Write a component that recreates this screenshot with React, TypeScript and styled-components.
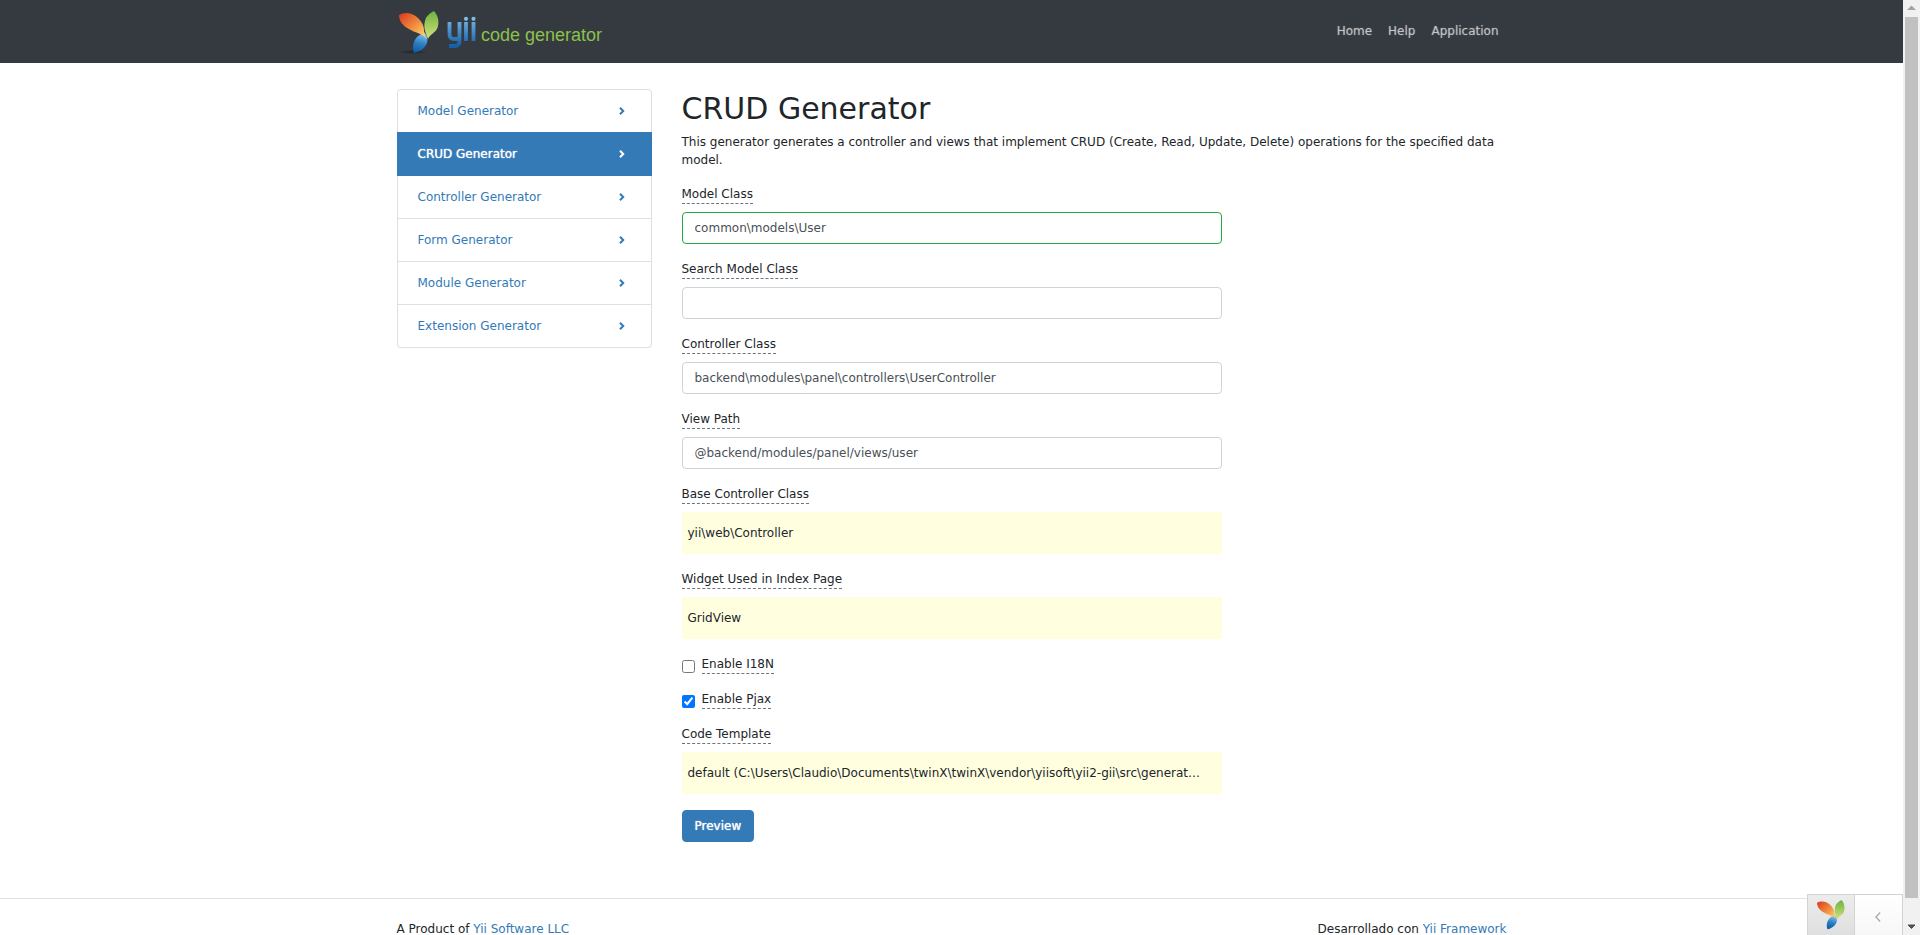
import React from "react";
import styled, { createGlobalStyle, css } from "styled-components";

const GlobalStyle = createGlobalStyle`
  *, *::before, *::after { box-sizing: border-box; }
  html, body { margin: 0; padding: 0; }
  body {
    font-family: Verdana, "DejaVu Sans", sans-serif;
    font-size: 12px;
    line-height: 18px;
    color: #212529;
    background: #fff;
  }
`;

const Shell = styled.div`
  display: grid;
  grid-template-columns: minmax(0, 1fr) 17px;
  height: 100vh;
`;

const Viewport = styled.div`
  height: 100vh;
  overflow-y: auto;
  scrollbar-width: none;
`;

const Container = styled.div`
  width: 100%;
  max-width: 1140px;
  margin: 0 auto;
  padding: 0 15px;
`;

const Header = styled.header`
  background: #343a40;
`;

const HeaderInner = styled(Container)`
  display: flex;
  justify-content: space-between;
  align-items: center;
  height: 63px;
`;

const Brand = styled.a`
  display: block;
  height: 48px;
`;

const Nav = styled.nav`
  display: flex;
  padding: 0 8px 2px 0;
  gap: 16px;
`;

const NavLink = styled.a`
  color: rgba(255, 255, 255, 0.5);
  text-decoration: none;
  text-shadow: 0 0 1px currentColor;
`;

const Body = styled(Container)`
  display: grid;
  grid-template-columns: minmax(0, 255fr) minmax(0, 825fr);
  gap: 30px;
  padding-top: 26px;
  padding-bottom: 56px;
`;

const Menu = styled.nav`
  align-self: start;
  display: flex;
  flex-direction: column;
`;

const MenuItem = styled.a<{ $active?: boolean }>`
  display: flex;
  justify-content: space-between;
  align-items: center;
  padding: 12px 26px 12px 20px;
  border: 1px solid #dfdfdf;
  color: #337ab7;
  text-decoration: none;
  & + & { border-top-width: 0; }
  &:first-child { border-radius: 4px 4px 0 0; }
  &:last-child { border-radius: 0 0 4px 4px; }
  ${(p) =>
    p.$active &&
    css`
      background: #337ab7;
      border-color: #337ab7;
      color: #fff;
      text-shadow: 0 0 1px currentColor;
      && { margin-top: -1px; border-top-width: 1px; }
    `}
`;

const Title = styled.h1`
  margin: 0 0 4px;
  font-size: 30px;
  line-height: 40px;
  font-weight: 400;
`;

const Lead = styled.p`
  margin: 0 0 16px;
`;

const Form = styled.form`
  width: 100%;
  max-width: 540px;
`;

const Group = styled.div`
  margin-bottom: 16px;
`;

const Label = styled.label`
  display: block;
  width: fit-content;
  border-bottom: 1px dashed #6c757d;
`;

const Input = styled.input<{ $valid?: boolean }>`
  display: block;
  width: 100%;
  height: 32px;
  margin-top: 8px;
  padding: 6px 12px;
  font: inherit;
  color: #495057;
  background: #fff;
  border: 1px solid ${(p) => (p.$valid ? "#28a745" : "#ced4da")};
  border-radius: 4px;
`;

const Sticky = styled.output`
  display: block;
  margin-top: 8px;
  padding: 12px 6px;
  background: #ffffe0;
  white-space: nowrap;
  overflow: hidden;
  text-overflow: ellipsis;
`;

const Check = styled.div`
  display: flex;
  gap: 7px;
  margin-bottom: 16px;
`;

const CheckInput = styled.input`
  width: 13px;
  height: 13px;
  margin: 5px 0 0;
`;

const Button = styled.button`
  display: block;
  height: 32px;
  padding: 6px 12px;
  font: inherit;
  color: #fff;
  text-shadow: 0 0 1px currentColor;
  background: #337ab7;
  border: 1px solid #337ab7;
  border-radius: 4px;
`;

const Footer = styled.footer`
  border-top: 1px solid #dee2e6;
  padding: 21px 0;
`;

const FooterInner = styled(Container)`
  display: flex;
  justify-content: space-between;
`;

const Link = styled.a`
  color: #337ab7;
  text-decoration: none;
`;

const Debug = styled.aside`
  position: fixed;
  right: 17px;
  bottom: 0;
  display: flex;
  height: 41px;
  border: 1px solid #d3d3d3;
  border-width: 1px 1px 0;
`;

const DebugLogo = styled.a`
  display: flex;
  align-items: center;
  justify-content: center;
  width: 46px;
  background: linear-gradient(#ececec, #dfdfdf);
`;

const DebugToggle = styled.button`
  display: flex;
  align-items: center;
  justify-content: center;
  width: 48px;
  padding: 4px 2px 0 0;
  border: 0;
  border-left: 1px solid #d3d3d3;
  background: linear-gradient(#fff, #f7f7f7);
`;

const ScrollBar = styled.div`
  display: flex;
  flex-direction: column;
  align-items: center;
  background: #f1f1f1;
`;

const ScrollArrow = styled.svg`
  display: block;
  width: 17px;
  height: 17px;
`;

const ScrollThumb = styled.div`
  width: 13px;
  height: calc(100% - 54px);
  margin-bottom: auto;
  background: #c1c1c1;
`;

const Petals = ({ id }: { id: string }) => (
  <>
    <defs>
      <linearGradient id={id + "o"} x1="0" y1="0" x2="1" y2="1">
        <stop offset="0" stopColor="#d9381e" />
        <stop offset="0.5" stopColor="#f08a3c" />
        <stop offset="1" stopColor="#fde67a" />
      </linearGradient>
      <linearGradient id={id + "g"} x1="0.4" y1="0" x2="0.4" y2="1">
        <stop offset="0" stopColor="#6db33f" />
        <stop offset="1" stopColor="#d3e27a" />
      </linearGradient>
      <linearGradient id={id + "b"} x1="0.6" y1="0" x2="0.4" y2="1">
        <stop offset="0" stopColor="#8cc8f0" />
        <stop offset="0.55" stopColor="#2c7fc4" />
        <stop offset="1" stopColor="#0f5ba5" />
      </linearGradient>
    </defs>
    <path d="M35 0C39 4 41 12 38 18C36 22 31 23 29 28C27 22 24 17 26 10C27 5 31 2 35 0Z" fill={`url(#${id}g)`} />
    <path d="M25 21C28 24 30 29 27 34C24 39 19 41 15 42C13 37 14 30 18 26C20 24 23 23 25 21Z" fill={`url(#${id}b)`} />
    <path d="M0 4C5 1 13 1 19 7C22 10 25 14 25 19C25 22 26 25 28 28C23 22 16 22 10 18C4 15 0 10 0 4Z" fill={`url(#${id}o)`} />
  </>
);

const Chevron = () => (
  <svg width="6" height="8" viewBox="0 0 6 8" fill="none" stroke="currentColor" strokeWidth="2" aria-hidden="true">
    <path d="M1 0.8L4.2 4L1 7.2" />
  </svg>
);

const generators = ["Model", "CRUD", "Controller", "Form", "Module", "Extension"];

const TextField = ({ id, label, value, valid }: { id: string; label: string; value: string; valid?: boolean }) => (
  <Group>
    <Label htmlFor={id}>{label}</Label>
    <Input id={id} type="text" defaultValue={value} $valid={valid} />
  </Group>
);

const StickyField = ({ id, label, value }: { id: string; label: string; value: string }) => (
  <Group>
    <Label htmlFor={id}>{label}</Label>
    <Sticky id={id}>{value}</Sticky>
  </Group>
);

const CheckField = ({ id, label, checked }: { id: string; label: string; checked?: boolean }) => (
  <Check>
    <CheckInput id={id} type="checkbox" defaultChecked={checked} />
    <Label htmlFor={id}>{label}</Label>
  </Check>
);

export default function App() {
  return (
    <Shell>
      <GlobalStyle />
      <Viewport>
        <Header>
          <HeaderInner>
            <Brand href="#">
              <svg width="210" height="48" viewBox="0 0 210 48" role="img" aria-label="yii code generator">
                <defs>
                  <linearGradient id="word" gradientUnits="userSpaceOnUse" x1="0" y1="8" x2="0" y2="38">
                    <stop offset="0" stopColor="#7dbdea" />
                    <stop offset="1" stopColor="#155fa8" />
                  </linearGradient>
                  <radialGradient id="shade">
                    <stop offset="0" stopColor="#1f2327" />
                    <stop offset="1" stopColor="#1f2327" stopOpacity="0" />
                  </radialGradient>
                </defs>
                <ellipse cx="16" cy="44" rx="15" ry="2" fill="url(#shade)" />
                <g transform="translate(2 3)">
                  <Petals id="h" />
                </g>
                <g fill="none" stroke="url(#word)" strokeWidth="3.8">
                  <path d="M52.500 14V26Q52.500 31 57 31H62M62.500 14V33Q62.500 38 58 38H52" />
                  <path d="M69 14V33M76.500 14V33" />
                </g>
                <circle cx="69" cy="10.800" r="2.100" fill="#7dbdea" />
                <circle cx="76.500" cy="10.800" r="2.100" fill="#7dbdea" />
                <text x="84" y="33" fontFamily="Liberation Sans, sans-serif" fontSize="18" fill="#8cc14b">
                  code generator
                </text>
              </svg>
            </Brand>
            <Nav>
              <NavLink href="#">Home</NavLink>
              <NavLink href="#">Help</NavLink>
              <NavLink href="#">Application</NavLink>
            </Nav>
          </HeaderInner>
        </Header>
        <Body>
          <Menu>
            {generators.map((name) => (
              <MenuItem key={name} href="#" $active={name === "CRUD"}>
                {name + " Generator"}
                <Chevron />
              </MenuItem>
            ))}
          </Menu>
          <main>
            <Title>CRUD Generator</Title>
            <Lead>
              This generator generates a controller and views that implement CRUD (Create, Read, Update, Delete)
              operations for the specified data model.
            </Lead>
            <Form>
              <TextField id="model" label="Model Class" value="common\models\User" valid />
              <TextField id="search" label="Search Model Class" value="" />
              <TextField id="controller" label="Controller Class" value="backend\modules\panel\controllers\UserController" />
              <TextField id="view" label="View Path" value="@backend/modules/panel/views/user" />
              <StickyField id="base" label="Base Controller Class" value="yii\web\Controller" />
              <StickyField id="widget" label="Widget Used in Index Page" value="GridView" />
              <CheckField id="i18n" label="Enable I18N" />
              <CheckField id="pjax" label="Enable Pjax" checked />
              <StickyField
                id="template"
                label="Code Template"
                value={"default (C:\\Users\\Claudio\\Documents\\twinX\\twinX\\vendor\\yiisoft\\yii2-gii\\src\\generat…"}
              />
              <Button type="button">Preview</Button>
            </Form>
          </main>
        </Body>
        <Footer>
          <FooterInner>
            <span>
              A Product of <Link href="#">Yii Software LLC</Link>
            </span>
            <span>
              Desarrollado con <Link href="#">Yii Framework</Link>
            </span>
          </FooterInner>
        </Footer>
      </Viewport>
      <ScrollBar>
        <ScrollArrow viewBox="0 0 17 17">
          <path d="M4 10L8.500 5.500L13 10Z" fill="#a3a3a3" />
        </ScrollArrow>
        <ScrollThumb />
        <ScrollArrow viewBox="0 0 17 17">
          <path d="M5 7L8.500 10.500L12 7Z" fill="#505050" stroke="#505050" />
        </ScrollArrow>
      </ScrollBar>
      <Debug>
        <DebugLogo href="#" aria-label="Yii debugger">
          <svg width="28" height="30" viewBox="0 0 40 43">
            <Petals id="d" />
          </svg>
        </DebugLogo>
        <DebugToggle type="button" aria-label="Expand toolbar">
          <svg width="6" height="10" viewBox="0 0 6 10" fill="none" stroke="#aaa" strokeWidth="1.300">
            <path d="M5.200 0.500L0.900 5L5.200 9.500" />
          </svg>
        </DebugToggle>
      </Debug>
    </Shell>
  );
}
